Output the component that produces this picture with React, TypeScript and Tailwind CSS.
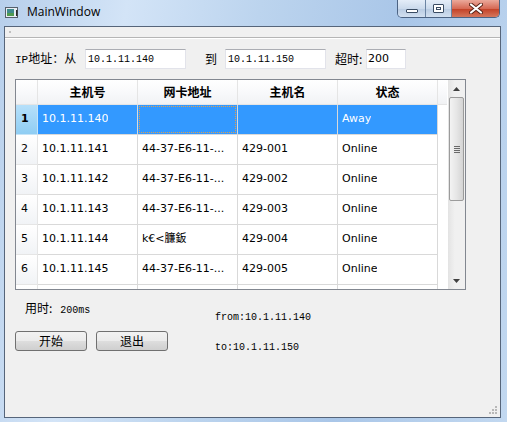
import React from "react";

const rows = [
  ["10.1.11.140", "", "", "Away"],
  ["10.1.11.141", "44-37-E6-11-...", "429-001", "Online"],
  ["10.1.11.142", "44-37-E6-11-...", "429-002", "Online"],
  ["10.1.11.143", "44-37-E6-11-...", "429-003", "Online"],
  ["10.1.11.144", "k€<臁鈑", "429-004", "Online"],
  ["10.1.11.145", "44-37-E6-11-...", "429-005", "Online"],
  ["", "", "", ""],
];

const headers = ["主机号", "网卡地址", "主机名", "状态"];

const cjk = "font-['Noto_Sans_CJK_SC',sans-serif]";
const mono = "font-['Liberation_Mono','Noto_Sans_CJK_SC',monospace]";
const tahoma = "font-['DejaVu_Sans','Noto_Sans_CJK_SC',sans-serif]";

function TitleBar() {
  return (
    <div className="flex h-[26px] items-start">
      {/* window icon */}
      <svg width="14" height="12" viewBox="0 0 14 12" className="ml-[5px] mt-[7px]">
        <rect x="0.5" y="0.5" width="12" height="10" fill="#e9eef3" stroke="#56606b" />
        <rect x="2" y="2" width="7" height="7" fill="#3f8a8c" />
        <rect x="2" y="6" width="7" height="3" fill="#4f9a4e" />
        <rect x="11" y="3" width="1.5" height="6" fill="#2a2a2a" />
      </svg>
      <span className="ml-[8px] mt-[4px] font-['Segoe_UI','Open_Sans',sans-serif] text-[12px] leading-[16px] text-black">
        MainWindow
      </span>
      <div className="ml-auto mr-[7px] flex h-[18px] overflow-hidden rounded-b-[5px] border border-t-0 border-[#4c6383]">
        <div className="flex w-[28px] items-center justify-center border-r border-[#6b84a3] bg-[linear-gradient(180deg,#e4edf8,#cbdaec_50%,#b8cbe2_51%,#d2e0f0)]">
          <div className="mt-[4px] h-[4px] w-[12px] rounded-[1px] border border-[#3a4c63] bg-white" />
        </div>
        <div className="flex w-[26px] items-center justify-center border-r border-[#6b84a3] bg-[linear-gradient(180deg,#e4edf8,#cbdaec_50%,#b8cbe2_51%,#d2e0f0)]">
          <div className="flex h-[9px] w-[11px] items-center justify-center rounded-[1px] border border-[#3a4c63] bg-white">
            <div className="h-[3px] w-[5px] border border-[#3a4c63]" />
          </div>
        </div>
        <div className="flex w-[47px] items-center justify-center bg-[linear-gradient(180deg,#eba99b,#d66a55_50%,#c23f25_51%,#d5775d)]">
          <svg width="14" height="11" viewBox="0 0 14 11">
            <path d="M2 1.5 L12 9.5 M12 1.5 L2 9.5" stroke="#5a2418" strokeWidth="4" strokeLinecap="round" />
            <path d="M2 1.5 L12 9.5 M12 1.5 L2 9.5" stroke="#ffffff" strokeWidth="2.2" strokeLinecap="round" />
          </svg>
        </div>
      </div>
    </div>
  );
}

function ScrollBar() {
  return (
    <div className="flex w-[17px] flex-col bg-[linear-gradient(90deg,#e3e3e3,#f0f0f0_40%,#f0f0f0)]">
      <div className="flex h-[17px] items-center justify-center">
        <svg width="7" height="4" viewBox="0 0 7 4">
          <path d="M0 4 L3.5 0 L7 4 Z" fill="#404040" />
        </svg>
      </div>
      <div className="mx-[1px] flex h-[104px] items-center justify-center rounded-[2px] border border-[#9b9b9b] bg-[linear-gradient(90deg,#f3f3f3,#e6e6e6_50%,#d4d4d4)]">
        <div className="flex flex-col gap-[1px]">
          <div className="h-[1px] w-[6px] bg-[#6a6a6a]" />
          <div className="h-[1px] w-[6px] bg-[#6a6a6a]" />
          <div className="h-[1px] w-[6px] bg-[#6a6a6a]" />
          <div className="h-[1px] w-[6px] bg-[#6a6a6a]" />
        </div>
      </div>
      <div className="flex-1" />
      <div className="flex h-[17px] items-center justify-center">
        <svg width="7" height="4" viewBox="0 0 7 4">
          <path d="M0 0 L3.5 4 L7 0 Z" fill="#404040" />
        </svg>
      </div>
    </div>
  );
}

function Table() {
  return (
    <div className="ml-[10px] mt-[10px] flex h-[211px] w-[451px] overflow-hidden border border-[#828790] bg-white">
      <div className="flex w-[432px] flex-col">
        {/* header */}
        <div className="flex h-[25px] shrink-0 border-b border-[#e5e5e5] bg-[linear-gradient(180deg,#ffffff,#f7f8fa_60%,#f1f2f4)]">
          <div className="w-[22px] border-r border-[#e5e5e5]" />
          {headers.map((h) => (
            <div
              key={h}
              className={`flex w-[100px] items-center justify-center border-r border-[#e5e5e5] ${cjk} text-[12px] font-bold text-black`}
            >
              {h}
            </div>
          ))}
          <div className="flex-1" />
        </div>
        {rows.map((r, i) => {
          const sel = i === 0;
          return (
            <div key={i} className="flex h-[30px] shrink-0">
              <div
                className={`flex w-[22px] items-center border-b border-r pl-[5px] ${tahoma} text-[11px] ${
                  sel
                    ? "border-[#c6e4f7] bg-[linear-gradient(180deg,#b6e0fa,#8fcdf3)] font-bold text-black"
                    : "border-[#e5e5e5] bg-[linear-gradient(180deg,#ffffff,#f1f3f6)] text-black"
                }`}
              >
                {i < 6 ? i + 1 : ""}
              </div>
              {r.map((c, j) => (
                <div
                  key={j}
                  className={`flex w-[100px] items-center border-b border-r ${tahoma} text-[11px] ${
                    sel ? "border-[#d9d9d9] bg-[#3399ff] text-white" : "border-[#d9d9d9] text-black"
                  }`}
                >
                  {sel && j === 1 ? (
                    <div className="m-[1px] h-[27px] w-[97px] border border-dotted border-[#e0a050] bg-[#3399ff]" />
                  ) : (
                    <span className="truncate pl-[4px]">{c}</span>
                  )}
                </div>
              ))}
            </div>
          );
        })}
      </div>
      <div className="w-[1px]" />
      <ScrollBar />
    </div>
  );
}

function Button({ label }: { label: string }) {
  return (
    <div
      className={`flex h-[20px] w-[72px] items-center justify-center rounded-[3px] border border-[#707070] bg-[linear-gradient(180deg,#f2f2f2,#ebebeb_48%,#dddddd_52%,#cfcfcf)] ${cjk} text-[12px] text-black`}
    >
      {label}
    </div>
  );
}

export default function App() {
  return (
    <div className="h-[422px] w-[507px] overflow-hidden bg-[linear-gradient(100deg,#b7cfeb_0%,#d3e4f7_22%,#bcd4ee_45%,#a9c6e8_70%,#c2d8f0_100%)]">
      <TitleBar />
      <div className="ml-[4px] flex h-[392px] w-[497px] flex-col border border-[#56657a] bg-[#f0f0f0]">
        {/* toolbar strip */}
        <div className="h-[11px] shrink-0 border-b border-[#b5b5b5] bg-[#f0f0f0] pl-[4px] pt-[4px]">
          <div className="h-[2px] w-[2px] bg-[#c0c0c0]" />
        </div>
        <div className="flex h-[1px] shrink-0 bg-white" />

        {/* address row */}
        <div className="ml-[10px] mt-[10px] flex h-[20px] items-center">
          <span className={`w-[70px] ${cjk} text-[12px] text-black`}>
            <span className={`${mono} text-[11px]`}>IP</span>地址：从
          </span>
          <div className={`flex h-[20px] w-[101px] items-center border border-[#e2e3ea] border-t-[#abadb3] bg-white pl-[2px] ${mono} text-[10px] text-black`}>
            10.1.11.140
          </div>
          <span className={`w-[39px] pl-[19px] ${cjk} text-[12px] text-black`}>到</span>
          <div className={`flex h-[20px] w-[101px] items-center border border-[#e2e3ea] border-t-[#abadb3] bg-white pl-[2px] ${mono} text-[10px] text-black`}>
            10.1.11.150
          </div>
          <span className={`w-[40px] pl-[9px] ${cjk} text-[12px] text-black`}>超时:</span>
          <div className={`flex h-[20px] w-[40px] items-center border border-[#e2e3ea] border-t-[#abadb3] bg-white pl-[1px] ${tahoma} text-[11px] text-black`}>
            200
          </div>
        </div>

        <Table />

        {/* bottom area */}
        <div className="flex">
          <div className="ml-[10px] flex w-[200px] flex-col">
            <div className={`ml-[10px] mt-[10px] h-[16px] ${cjk} text-[12px] leading-[16px] text-black`}>
              用时:<span className={`${mono} ml-[8px] text-[10px]`}>200ms</span>
            </div>
            <div className="mt-[15px] flex gap-[9px]">
              <Button label="开始" />
              <Button label="退出" />
            </div>
          </div>
          <div className={`flex flex-col ${mono} text-[10px] text-black`}>
            <div className="mt-[21px] h-[14px] leading-[14px]">from:10.1.11.140</div>
            <div className="mt-[16px] h-[14px] leading-[14px]">to:10.1.11.150</div>
          </div>
        </div>

        <div className="flex-1" />
        {/* size grip */}
        <div className="mb-[3px] mr-[3px] flex justify-end">
          <svg width="8" height="8" viewBox="0 0 8 8">
            {[
              [6, 0],
              [3, 3],
              [6, 3],
              [0, 6],
              [3, 6],
              [6, 6],
            ].map(([x, y], k) => (
              <rect key={k} x={x} y={y} width="2" height="2" fill="#b8b8b8" />
            ))}
          </svg>
        </div>
      </div>
    </div>
  );
}
